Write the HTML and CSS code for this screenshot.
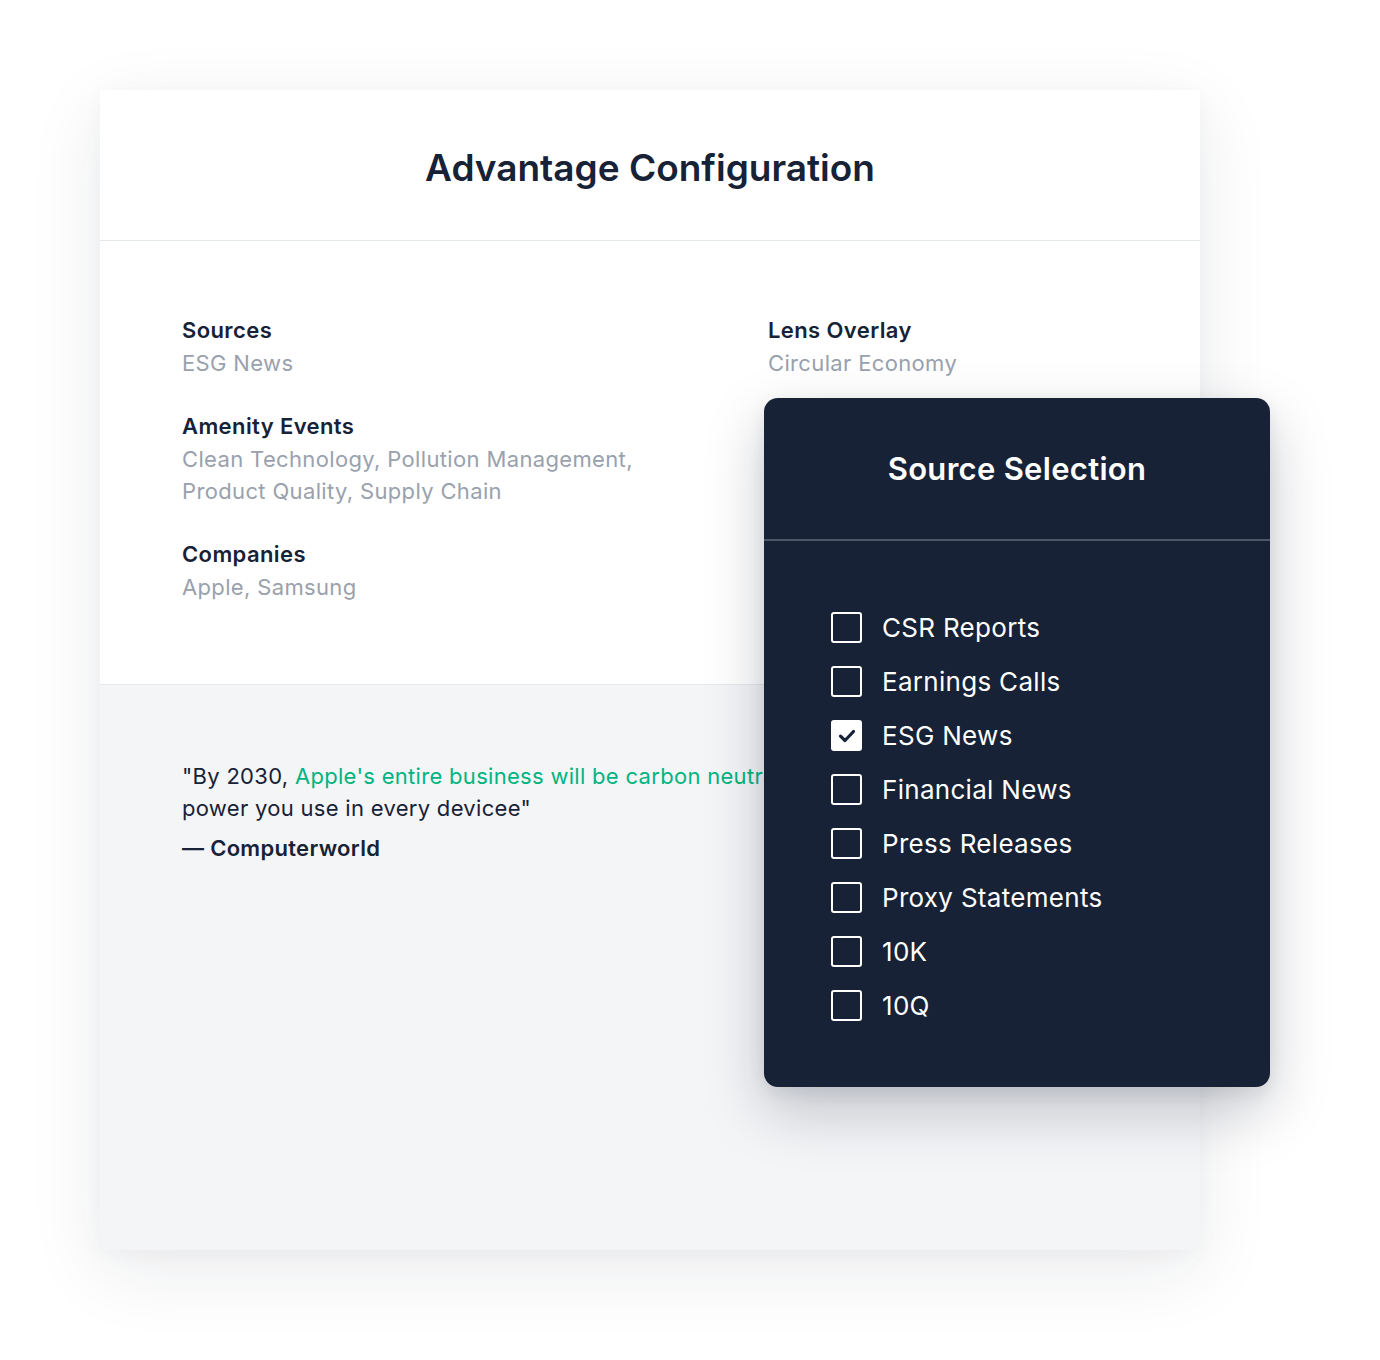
FILE: index.html
```html
<!DOCTYPE html>
<html lang="en">
<head>
<meta charset="utf-8">
<title>Advantage Configuration</title>
<link rel="stylesheet" href="styles.css">
</head>
<body>
<div class="stage">
  <div class="card">
    <div class="card-header">
      <h1 class="card-title">Advantage Configuration</h1>
    </div>
    <div class="card-body">
      <div class="col">
        <div class="field">
          <div class="field-label">Sources</div>
          <div class="field-value">ESG News</div>
        </div>
        <div class="field">
          <div class="field-label">Amenity Events</div>
          <div class="field-value">Clean Technology, Pollution Management,<br>Product Quality, Supply Chain</div>
        </div>
        <div class="field">
          <div class="field-label">Companies</div>
          <div class="field-value">Apple, Samsung</div>
        </div>
      </div>
      <div class="col">
        <div class="field">
          <div class="field-label">Lens Overlay</div>
          <div class="field-value">Circular Economy</div>
        </div>
      </div>
    </div>
    <div class="card-footer">
      <p class="quote"><span class="quote-line">"By 2030, <span class="highlight">Apple's entire business will be carbon neutral, including the</span></span><span class="quote-line">power you use in every devicee"</span></p>
      <p class="quote-source">— Computerworld</p>
    </div>

    <div class="popup">
      <div class="popup-header">
        <h2 class="popup-title">Source Selection</h2>
      </div>
      <ul class="options">
        <li class="option"><span class="box"></span><span class="option-label">CSR Reports</span></li>
        <li class="option"><span class="box"></span><span class="option-label">Earnings Calls</span></li>
        <li class="option"><span class="box checked"><svg width="20" height="16" viewBox="0 0 20 16"><path d="M3.5 8.2 L8 12.5 L16.5 3.5" fill="none" stroke="#172236" stroke-width="3.2" stroke-linecap="round" stroke-linejoin="round"/></svg></span><span class="option-label">ESG News</span></li>
        <li class="option"><span class="box"></span><span class="option-label">Financial News</span></li>
        <li class="option"><span class="box"></span><span class="option-label">Press Releases</span></li>
        <li class="option"><span class="box"></span><span class="option-label">Proxy Statements</span></li>
        <li class="option"><span class="box"></span><span class="option-label">10K</span></li>
        <li class="option"><span class="box"></span><span class="option-label">10Q</span></li>
      </ul>
    </div>
  </div>
</div>
</body>
</html>
```
FILE: styles.css
```css
* { box-sizing: border-box; }
html, body {
  margin: 0;
  padding: 0;
  background: #ffffff;
}
body {
  font-family: Inter, "Noto Sans", sans-serif;
  color: #172236;
  width: 1380px;
  height: 1360px;
  overflow: hidden;
}
.stage {
  padding: 90px 0 0 100px;
}
.card {
  position: relative;
  width: 1100px;
  height: 1160px;
  background: #ffffff;
  display: flex;
  flex-direction: column;
  box-shadow: 0 20px 70px rgba(20, 30, 50, 0.09), 0 4px 20px rgba(20, 30, 50, 0.03);
}
.card-header {
  height: 151px;
  border-bottom: 1px solid #e3e8ea;
  display: flex;
  align-items: center;
  justify-content: center;
}
.card-title {
  margin: 4px 0 0 0;
  font-size: 37px;
  font-weight: 600;
  letter-spacing: 0;
  color: #172236;
}
.card-body {
  display: grid;
  grid-template-columns: 586px 1fr;
  padding: 72px 82px 0 82px;
  height: 444px;
  border-bottom: 1px solid #e6e9ec;
}
.field {
  margin-bottom: 30px;
}
.field-label {
  font-size: 22px;
  font-weight: 600;
  line-height: 34px;
  letter-spacing: 0.4px;
  color: #172236;
}
.field-value {
  font-size: 22px;
  font-weight: 400;
  line-height: 32px;
  letter-spacing: 0.35px;
  color: #99a1ad;
}
.card-footer {
  flex: 1;
  background: #f4f5f7;
  padding: 75px 82px 0 82px;
}
.quote {
  margin: 0;
  font-size: 22px;
  line-height: 32px;
  letter-spacing: 0.3px;
  color: #172236;
}
.quote-line {
  display: block;
  max-width: 582px;
  white-space: nowrap;
  overflow: hidden;
}
.highlight {
  color: #00b47f;
}
.quote-source {
  margin: 8px 0 0 0;
  font-size: 22px;
  font-weight: 600;
  line-height: 32px;
  letter-spacing: 0.3px;
  color: #172236;
}
.popup {
  position: absolute;
  left: 664px;
  top: 308px;
  width: 506px;
  height: 689px;
  background: #172236;
  border-radius: 14px;
  box-shadow: 0 24px 60px rgba(10, 20, 40, 0.22), 0 6px 18px rgba(10, 20, 40, 0.08);
  color: #ffffff;
}
.popup-header {
  height: 143px;
  border-bottom: 2px solid #4c5669;
  display: flex;
  align-items: center;
  justify-content: center;
}
.popup-title {
  margin: 0;
  font-size: 31px;
  font-weight: 600;
  letter-spacing: 0.3px;
  color: #ffffff;
}
.options {
  list-style: none;
  margin: 0;
  padding: 71px 0 0 67px;
  display: flex;
  flex-direction: column;
  gap: 23px;
}
.option {
  display: flex;
  align-items: center;
  gap: 20px;
  height: 31px;
}
.box {
  width: 31px;
  height: 31px;
  border: 2.5px solid #ffffff;
  border-radius: 3px;
  flex: none;
  display: flex;
  align-items: center;
  justify-content: center;
}
.box.checked {
  background: #ffffff;
}
.option-label {
  font-size: 26px;
  font-weight: 400;
  color: #ffffff;
  letter-spacing: 0.3px;
}
```
